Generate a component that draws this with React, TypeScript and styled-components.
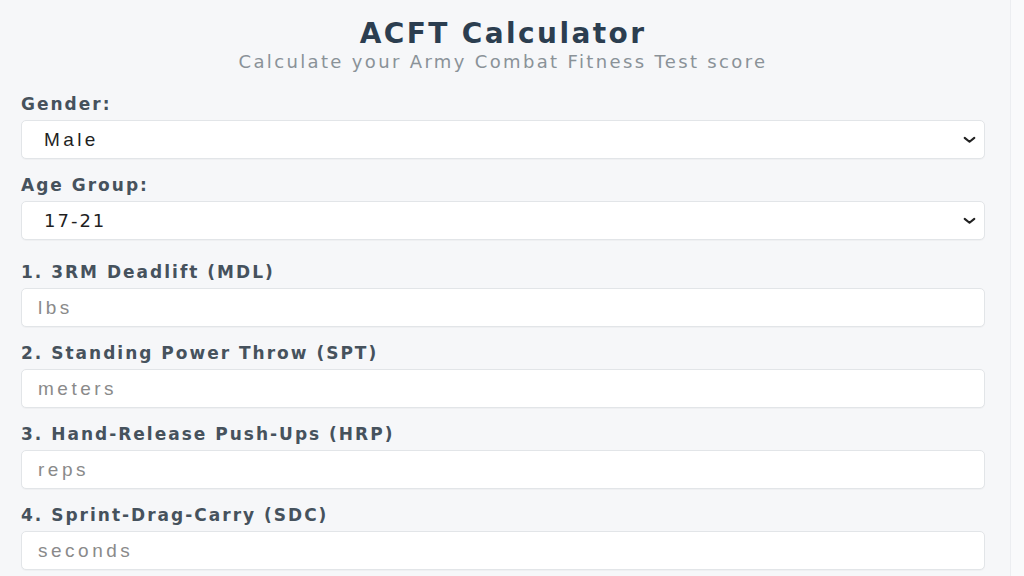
import styled, { createGlobalStyle } from 'styled-components';

const GlobalStyle = createGlobalStyle`
  * {
    box-sizing: border-box;
  }
  body {
    margin: 0;
    background-color: #f6f7f9;
    font-family: 'DejaVu Sans', 'Liberation Sans', sans-serif;
  }
`;

type Option = { value: string; label: string };

const genders: Option[] = [
  { value: 'male', label: 'Male' },
  { value: 'female', label: 'Female' },
];

const ageGroups: Option[] = [
  { value: '17-21', label: '17-21' },
  { value: '22-26', label: '22-26' },
  { value: '27-31', label: '27-31' },
];

const events = [
  { id: 'mdl', label: '1. 3RM Deadlift (MDL)', unit: 'lbs' },
  { id: 'spt', label: '2. Standing Power Throw (SPT)', unit: 'meters' },
  { id: 'hrp', label: '3. Hand-Release Push-Ups (HRP)', unit: 'reps' },
  { id: 'sdc', label: '4. Sprint-Drag-Carry (SDC)', unit: 'seconds' },
];

const Chevron = () => (
  <ChevronIcon width="15" height="14" viewBox="0 0 16 16">
    <path
      d="M2.5 5.5l5.5 4.5 5.5-4.5"
      fill="none"
      stroke="#222"
      strokeWidth="2.4"
      strokeLinecap="round"
      strokeLinejoin="round"
    />
  </ChevronIcon>
);

const App = () => {
  return (
    <Page>
      <GlobalStyle />
      <Main>
        <Header>
          <Title>ACFT Calculator</Title>
          <Subtitle>Calculate your Army Combat Fitness Test score</Subtitle>
        </Header>

        <Field>
          <Label htmlFor="gender">Gender:</Label>
          <SelectWrap>
            <Select id="gender" defaultValue="male">
              {genders.map((g) => (
                <option key={g.value} value={g.value}>
                  {g.label}
                </option>
              ))}
            </Select>
            <Chevron />
          </SelectWrap>
        </Field>

        <Field>
          <Label htmlFor="age">Age Group:</Label>
          <SelectWrap>
            <Select id="age" defaultValue="17-21" $numeric>
              {ageGroups.map((a) => (
                <option key={a.value} value={a.value}>
                  {a.label}
                </option>
              ))}
            </Select>
            <Chevron />
          </SelectWrap>
        </Field>

        <Events>
          {events.map((ev) => (
            <Field key={ev.id}>
              <Label htmlFor={ev.id}>{ev.label}</Label>
              <Input id={ev.id} type="number" placeholder={ev.unit} />
            </Field>
          ))}
        </Events>
      </Main>
      <Gutter />
    </Page>
  );
};

export default App;

const Page = styled.div`
  display: flex;
  min-height: 100vh;
`;

const Main = styled.main`
  flex: 1;
  padding: 17px 25px 0 21px;
`;

const Gutter = styled.div`
  width: 14px;
  border-left: 1px solid #eceef1;
  background-color: #f9fafb;
`;

const Header = styled.header`
  display: flex;
  flex-direction: column;
  align-items: center;
  margin-bottom: 20px;
`;

const Title = styled.h1`
  margin: 0;
  font-family: 'DejaVu Sans', sans-serif;
  font-size: 28px;
  font-weight: 700;
  letter-spacing: 2.4px;
  line-height: 34px;
  color: #2c3e50;
`;

const Subtitle = styled.p`
  margin: -1px 0 0;
  font-family: 'DejaVu Sans', sans-serif;
  font-size: 18px;
  letter-spacing: 2.35px;
  line-height: 24px;
  color: #8a9298;
`;

const Events = styled.div`
  padding-top: 6px;
`;

const Field = styled.div`
  display: flex;
  flex-direction: column;
  margin-bottom: 16px;
`;

const Label = styled.label`
  font-family: 'DejaVu Sans', sans-serif;
  font-size: 17px;
  font-weight: 700;
  letter-spacing: 2px;
  line-height: 20px;
  color: #46525d;
  margin-bottom: 6px;
`;

const SelectWrap = styled.div`
  position: relative;
`;

const ChevronIcon = styled.svg`
  position: absolute;
  right: 8px;
  top: 50%;
  transform: translateY(-50%);
  pointer-events: none;
`;

const fieldBox = `
  width: 100%;
  height: 39px;
  border: 1px solid #e2e5e8;
  border-radius: 5px;
  background-color: #ffffff;
  box-shadow: 0 1px 1px rgba(0, 0, 0, 0.03);
  outline: none;
`;

const Select = styled.select<{ $numeric?: boolean }>`
  ${fieldBox}
  appearance: none;
  padding: 0 22px;
  font-family: ${({ $numeric }) =>
    $numeric ? "'DejaVu Sans', sans-serif" : "'Liberation Sans', sans-serif"};
  font-size: ${({ $numeric }) => ($numeric ? '18px' : '19px')};
  letter-spacing: ${({ $numeric }) => ($numeric ? '2px' : '3.4px')};
  color: #1f1f1f;
`;

const Input = styled.input`
  ${fieldBox}
  padding: 0 16px;
  font-family: 'Liberation Sans', sans-serif;
  font-size: 19px;
  letter-spacing: 3.5px;
  color: #1f1f1f;

  &::placeholder {
    color: #8a8a8a;
  }

  &::-webkit-outer-spin-button,
  &::-webkit-inner-spin-button {
    appearance: none;
    margin: 0;
  }
`;
